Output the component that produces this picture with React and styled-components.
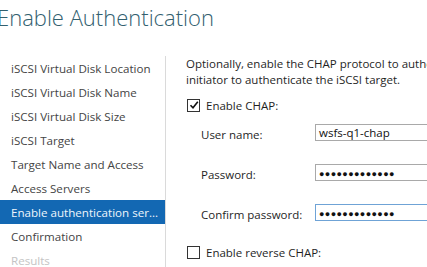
import React from 'react';
import styled, { createGlobalStyle } from 'styled-components';

const Global = createGlobalStyle`
  html, body {
    margin: 0;
    padding: 0;
    background: #ffffff;
    overflow: hidden;
  }
  body {
    font-family: "Open Sans", "Noto Sans", sans-serif;
    color: #2b2b2b;
  }
`;

const Page = styled.div`
  width: 427px;
  height: 267px;
  overflow: hidden;
  display: flex;
  flex-direction: column;
`;

const Title = styled.h1`
  margin: 0 0 0 -3px;
  height: 56px;
  box-sizing: border-box;
  padding-top: 2px;
  font-size: 22px;
  font-weight: 300;
  line-height: 30px;
  color: #32606f;
  white-space: nowrap;
`;

const Body = styled.div`
  flex: 1;
  display: flex;
  min-height: 0;
`;

const Nav = styled.ul`
  list-style: none;
  margin: 0;
  padding: 0;
  width: 165px;
  flex-shrink: 0;
  border-right: 1px solid #dadada;
`;

const NavItem = styled.li`
  height: 24px;
  padding-left: 11px;
  display: flex;
  align-items: center;
  font-size: 11.6px;
  white-space: nowrap;
  background: ${p => (p.$active ? '#1368b3' : 'transparent')};
  color: ${p => (p.$active ? '#eef5fb' : p.$disabled ? '#c4c4c4' : '#444444')};
`;

const Content = styled.div`
  flex: 1;
  padding-left: 20px;
  font-size: 11.5px;
  white-space: nowrap;
  overflow: hidden;
`;

const Intro = styled.p`
  margin: 0;
  line-height: 16px;
  color: #1f1f1f;
`;

const CheckRow = styled.label`
  display: flex;
  align-items: center;
  gap: 6px;
  height: 16px;
  margin-top: ${p => p.$top}px;
  margin-left: 1px;
  color: #1f1f1f;
`;

const Box = styled.span`
  width: 11px;
  height: 11px;
  border: 1px solid #333333;
  background: #ffffff;
  display: flex;
  align-items: center;
  justify-content: center;
`;

const Form = styled.div`
  display: grid;
  grid-template-columns: 114px 130px;
  row-gap: 21px;
  margin-top: 11px;
  margin-left: 15px;
`;

const Label = styled.span`
  height: 17px;
  display: flex;
  align-items: center;
  padding-top: 2px;
  color: #1f1f1f;
`;

const Field = styled.div`
  height: 17px;
  box-sizing: border-box;
  border: 1px solid ${p => (p.$focused ? '#6fa3d6' : '#a9a9a9')};
  padding-left: 3px;
  display: flex;
  align-items: center;
  font-size: 11.5px;
  color: #111111;
`;

const Dots = styled.span`
  font-size: 9px;
  letter-spacing: 0.4px;
  padding-top: 1px;
`;

function Check({ checked }) {
  return (
    <Box>
      {checked && (
        <svg width="10" height="10" viewBox="0 0 10 10">
          <path d="M1.5 5.2 L4 7.8 L8.8 1.8" fill="none" stroke="#111" strokeWidth="1.6" />
        </svg>
      )}
    </Box>
  );
}

const steps = [
  'iSCSI Virtual Disk Location',
  'iSCSI Virtual Disk Name',
  'iSCSI Virtual Disk Size',
  'iSCSI Target',
  'Target Name and Access',
  'Access Servers',
  'Enable authentication ser...',
  'Confirmation',
  'Results',
];

export default function App() {
  return (
    <Page>
      <Global />
      <Title>Enable Authentication</Title>
      <Body>
        <Nav>
          {steps.map((s, i) => (
            <NavItem key={s} $active={i === 6} $disabled={i === 8}>
              {s}
            </NavItem>
          ))}
        </Nav>
        <Content>
          <Intro>
            Optionally, enable the CHAP protocol to authenticate the iSCSI
            <br />
            initiator to authenticate the iSCSI target.
          </Intro>
          <CheckRow $top={9}>
            <Check checked />
            Enable CHAP:
          </CheckRow>
          <Form>
            <Label>User name:</Label>
            <Field>wsfs-q1-chap</Field>
            <Label>Password:</Label>
            <Field><Dots>●●●●●●●●●●●●●</Dots></Field>
            <Label>Confirm password:</Label>
            <Field $focused><Dots>●●●●●●●●●●●●●</Dots></Field>
          </Form>
          <CheckRow $top={21}>
            <Check />
            Enable reverse CHAP:
          </CheckRow>
        </Content>
      </Body>
    </Page>
  );
}
